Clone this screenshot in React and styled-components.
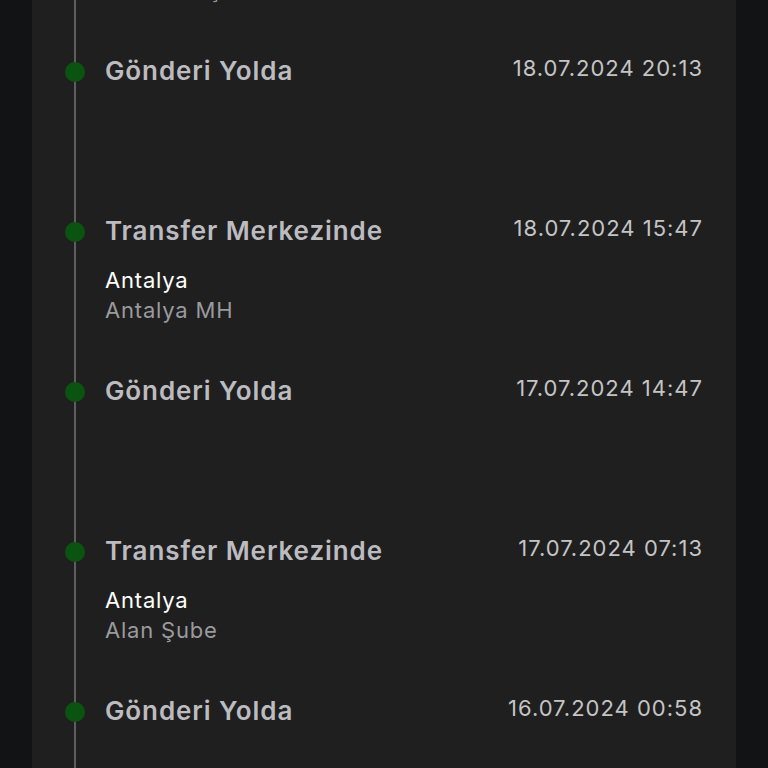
import React from 'react';
import styled, { createGlobalStyle } from 'styled-components';

const GlobalStyle = createGlobalStyle`
  html, body {
    margin: 0;
    padding: 0;
    background: #121315;
    height: 100%;
    overflow: hidden;
  }
  #root {
    height: 100%;
  }
`;

const Page = styled.div`
  height: 768px;
  padding: 0 32px;
  overflow: hidden;
  font-family: "Inter", "Noto Sans", sans-serif;
`;

const Card = styled.div`
  height: 100%;
  background: #1f1f1f;
  overflow: hidden;
`;

// the list is scrolled: the item above the first one is mostly out of view
const Timeline = styled.ul`
  list-style: none;
  margin: -105px 0 0 0;
  padding: 0;
`;

const Item = styled.li`
  display: flex;
  height: 160px;
`;

const Rail = styled.div`
  position: relative;
  flex: 0 0 73px;
  &::before {
    content: "";
    position: absolute;
    left: 42px;
    top: 0;
    bottom: 0;
    width: 2px;
    background: #5e5e60;
  }
`;

const Dot = styled.span`
  position: absolute;
  left: 33px;
  top: 7px;
  width: 20px;
  height: 20px;
  border-radius: 50%;
  background: #0b5310;
`;

const Body = styled.div`
  flex: 1;
  padding-right: 33px;
`;

const Head = styled.div`
  display: flex;
  justify-content: space-between;
  align-items: flex-start;
`;

const Title = styled.h3`
  margin: 0;
  font-size: 26px;
  line-height: 32px;
  font-weight: 600;
  letter-spacing: 0.9px;
  color: #bcbcc0;
`;

const Time = styled.span`
  font-size: 22px;
  line-height: 26px;
  letter-spacing: 1px;
  color: #c4c4c6;
`;

const Place = styled.div`
  margin-top: 18px;
`;

const Line = styled.div`
  font-size: 22px;
  line-height: 30px;
  letter-spacing: 0.8px;
  color: ${p => (p.muted ? '#9a9a9e' : '#ffffff')};
`;

const events = [
  { title: 'Transfer Merkezinde', time: '19.07.2024 02:10', city: 'Antalya', unit: 'Kumluca Şube' },
  { title: 'Gönderi Yolda', time: '18.07.2024 20:13' },
  { title: 'Transfer Merkezinde', time: '18.07.2024 15:47', city: 'Antalya', unit: 'Antalya MH' },
  { title: 'Gönderi Yolda', time: '17.07.2024 14:47' },
  { title: 'Transfer Merkezinde', time: '17.07.2024 07:13', city: 'Antalya', unit: 'Alan Şube' },
  { title: 'Gönderi Yolda', time: '16.07.2024 00:58' },
];

export default function App() {
  return (
    <>
      <GlobalStyle />
      <Page>
        <Card>
          <Timeline>
            {events.map((e, i) => (
              <Item key={i}>
                <Rail>
                  <Dot />
                </Rail>
                <Body>
                  <Head>
                    <Title>{e.title}</Title>
                    <Time>{e.time}</Time>
                  </Head>
                  {e.city && (
                    <Place>
                      <Line>{e.city}</Line>
                      <Line muted>{e.unit}</Line>
                    </Place>
                  )}
                </Body>
              </Item>
            ))}
          </Timeline>
        </Card>
      </Page>
    </>
  );
}
